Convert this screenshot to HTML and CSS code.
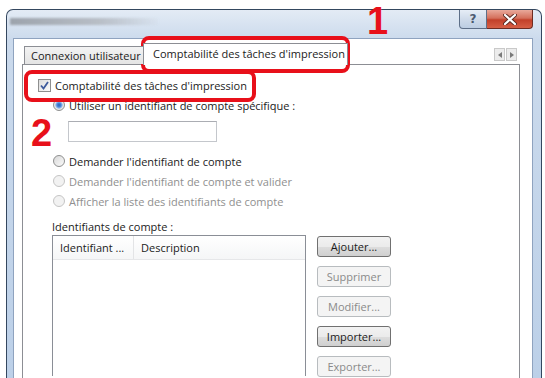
FILE: index.html
```html
<!DOCTYPE html>
<html lang="fr">
<head>
    <meta charset="UTF-8">
    <title>Comptabilité des tâches d'impression</title>
    <link rel="stylesheet" href="styles.css">
</head>
<body>
    <div class="window">
        <div class="titlebar">
            <div class="title-blur"></div>
            <div class="caption-buttons">
                <div class="cap-btn help">?</div>
                <div class="cap-btn close">
                    <svg width="14" height="11" viewBox="0 0 14 11"><path d="M2 1 L12 10 M12 1 L2 10" stroke="#5a2a22" stroke-width="4" stroke-linecap="round"/><path d="M2 1 L12 10 M12 1 L2 10" stroke="#fff" stroke-width="2.2" stroke-linecap="round"/></svg>
                </div>
            </div>
        </div>
        <div class="client">
            <div class="tabs">
                <div class="tab">Connexion utilisateur</div>
                <div class="tab active">Comptabilité des tâches d'impression</div>
                <div class="tab-scroll">
                    <span class="scroll-btn"><svg width="4" height="6" viewBox="0 0 4 6"><path d="M4 0 L0 3 L4 6 Z" fill="#7a7a7a"/></svg></span>
                    <span class="scroll-btn"><svg width="4" height="6" viewBox="0 0 4 6"><path d="M0 0 L4 3 L0 6 Z" fill="#7a7a7a"/></svg></span>
                </div>
            </div>
            <div class="tab-panel">
                <div class="check-row">
                    <span class="checkbox"><svg width="9" height="9" viewBox="0 0 9 9"><path d="M1 4.5 L3.5 7.5 L8 1" fill="none" stroke="#3d5a9c" stroke-width="1.8"/></svg></span>
                    Comptabilité des tâches d'impression
                </div>
                <div class="options">
                    <div class="radio-row"><span class="radio checked"></span>Utiliser un identifiant de compte spécifique :</div>
                    <div class="text-field"></div>
                    <div class="radio-row"><span class="radio"></span>Demander l'identifiant de compte</div>
                    <div class="radio-row disabled"><span class="radio"></span>Demander l'identifiant de compte et valider</div>
                    <div class="radio-row disabled"><span class="radio"></span>Afficher la liste des identifiants de compte</div>
                    <div class="list-label">Identifiants de compte :</div>
                    <div class="list-area">
                        <div class="listbox">
                            <div class="list-header">
                                <span class="col col-id">Identifiant ...</span>
                                <span class="col col-desc">Description</span>
                            </div>
                        </div>
                        <div class="button-col">
                            <div class="btn">Ajouter...</div>
                            <div class="btn disabled">Supprimer</div>
                            <div class="btn disabled">Modifier...</div>
                            <div class="btn">Importer...</div>
                            <div class="btn disabled">Exporter...</div>
                        </div>
                    </div>
                </div>
            </div>
        </div>
    </div>

    <div class="callout callout-tab"></div>
    <div class="callout callout-check"></div>
    <div class="step step-1">1</div>
    <div class="step step-2">2</div>
</body>
</html>
```

FILE: styles.css
```css
body {
    margin: 0;
    height: 378px;
    overflow: hidden;
    background: #fff;
    font-family: "Open Sans", sans-serif;
    font-size: 11px;
    color: #1b1b1b;
}
.window {
    margin: 9px 3px 0 6px;
    height: 369px;
    box-sizing: border-box;
    border: 1px solid #34475f;
    border-bottom: none;
    border-radius: 7px 7px 0 0;
    background: linear-gradient(#e3ebf5, #cbdaec 30px, #bcd0e8);
    padding: 0 8px 0 6px;
    display: flex;
    flex-direction: column;
    overflow: hidden;
}
.titlebar {
    height: 28px;
    display: flex;
    flex-shrink: 0;
}
.title-blur {
    margin: 8px 0 0 -3px;
    width: 150px;
    height: 7px;
    background: linear-gradient(90deg, #8d939b, #b0b5bc 60%, rgba(200,210,222,0));
    filter: blur(1.2px);
    opacity: 0.8;
}
.caption-buttons {
    margin-left: auto;
    display: flex;
    height: 19px;
}
.cap-btn {
    height: 18px;
    display: flex;
    align-items: center;
    justify-content: center;
    border: 1px solid #5d6f88;
    border-top: none;
}
.help {
    width: 26px;
    border-radius: 0 0 0 4px;
    background: linear-gradient(#e6edf6, #cfdbea 50%, #bccde2);
    color: #4b5a70;
    font-family: "DejaVu Sans", sans-serif;
    font-size: 12px;
    font-weight: bold;
}
.close {
    width: 45px;
    border-left: none;
    border-color: #6e2c22;
    border-radius: 0 0 4px 0;
    background: linear-gradient(#e9a99b, #d4705c 45%, #c2402a 55%, #d65f45);
}
.client {
    flex: 1;
    min-height: 0;
    background: #fff;
    border: 1px solid #8fa3bf;
    border-bottom: none;
    padding: 5px 12px 0 8px;
    display: flex;
    flex-direction: column;
}
.tabs {
    height: 20px;
    display: flex;
    align-items: flex-end;
    flex-shrink: 0;
    position: relative;
    z-index: 1;
}
.tab {
    height: 17px;
    line-height: 17px;
    margin-left: 2px;
    padding: 0 6px;
    width: 107px;
    overflow: hidden;
    white-space: nowrap;
    border: 1px solid #8c8e94;
    border-bottom: none;
    background: linear-gradient(#f3f3f3, #e4e4e4);
}
.tab.active {
    width: auto;
    height: 21px;
    line-height: 19px;
    margin: 0 0 -1px -2px;
    padding: 0 2px 0 9px;
    background: #fff;
}
.tab-scroll {
    margin: 4px 3px 0 auto;
    align-self: flex-start;
    display: flex;
    gap: 1px;
}
.scroll-btn {
    width: 11px;
    height: 13px;
    display: flex;
    align-items: center;
    justify-content: center;
    background: #ececec;
    border: 1px solid #c9c9c9;
    box-sizing: border-box;
}
.tab-panel {
    flex: 1;
    min-height: 0;
    border: 1px solid #8c8e94;
    border-bottom: none;
    padding: 11px 0 0 15px;
}
.check-row {
    height: 18px;
    display: flex;
    align-items: center;
    gap: 4px;
}
.checkbox {
    width: 11px;
    height: 11px;
    border: 1px solid #8e8f8f;
    background: linear-gradient(135deg, #dcdcdc, #fbfbfb);
    display: flex;
    align-items: center;
    justify-content: center;
}
.options {
    padding-left: 15px;
    padding-top: 1px;
}
.radio-row {
    height: 20px;
    display: flex;
    align-items: center;
    gap: 4px;
}
.radio-row.disabled {
    color: #8f8f8f;
}
.radio {
    width: 10px;
    height: 10px;
    border-radius: 50%;
    border: 1px solid #8e8f8f;
    background: linear-gradient(135deg, #d9d9d9, #fafafa);
}
.radio.checked {
    background: radial-gradient(circle, #2c64b5 0, #4a86d8 2px, #a9c6ec 3.5px, #e6e6e6 4px);
}
.radio-row.disabled .radio {
    border-color: #c5c5c5;
    background: #f2f2f2;
}
.text-field {
    margin: 6px 0 9px 15px;
    width: 147px;
    height: 19px;
    border: 1px solid #c4c7cc;
    border-top-color: #abadb3;
}
.list-label {
    margin-top: 8px;
    height: 16px;
    line-height: 16px;
    margin-left: -1px;
}
.list-area {
    display: flex;
    gap: 11px;
    margin-left: -1px;
}
.listbox {
    width: 252px;
    height: 140px;
    border: 1px solid #8a8e96;
    border-bottom: none;
}
.list-header {
    height: 23px;
    display: flex;
    background: linear-gradient(#fff, #f5f6f7);
    border-bottom: 1px solid #e6e7e9;
}
.col {
    line-height: 23px;
    padding-left: 7px;
}
.col-id {
    width: 73px;
    border-right: 1px solid #e3e4e6;
}
.button-col {
    margin-top: 1px;
    display: flex;
    flex-direction: column;
    gap: 9px;
}
.btn {
    width: 72px;
    height: 19px;
    line-height: 19px;
    text-align: center;
    border: 1px solid #707070;
    border-radius: 3px;
    background: linear-gradient(#f2f2f2, #ebebeb 50%, #dddddd 51%, #cfcfcf);
}
.btn.disabled {
    border-color: #b8bcbf;
    background: #f4f4f4;
    color: #8a8a8a;
}
.callout {
    position: absolute;
    border: 4px solid #e8101a;
    border-radius: 8px;
    box-sizing: border-box;
}
.callout-tab {
    left: 141px;
    top: 36px;
    width: 209px;
    height: 37px;
}
.callout-check {
    left: 24px;
    top: 70px;
    width: 232px;
    height: 32px;
}
.step {
    position: absolute;
    font-family: "Liberation Sans", Arial, sans-serif;
    font-weight: bold;
    font-size: 38px;
    line-height: 1;
    color: #e8101a;
}
.step-1 {
    left: 367px;
    top: 2px;
}
.step-2 {
    left: 31px;
    top: 114px;
}
```
